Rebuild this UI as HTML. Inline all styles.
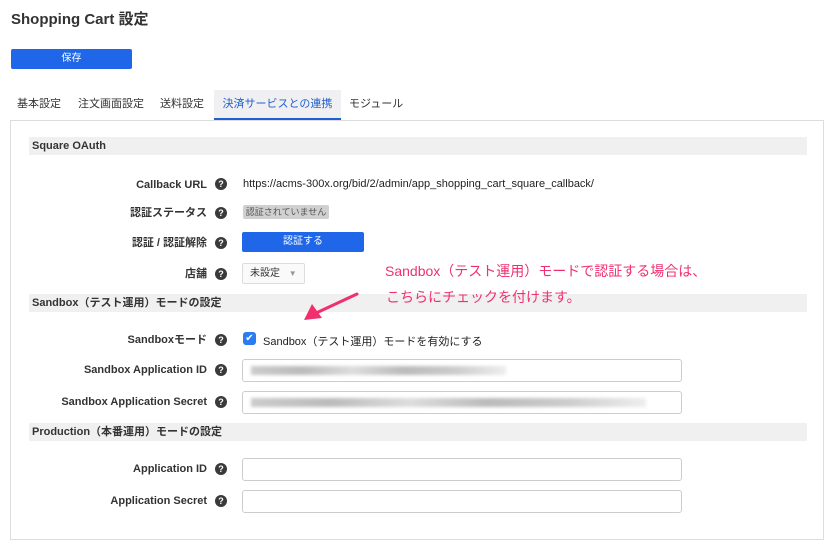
<!DOCTYPE html>
<html><head><meta charset="utf-8"><style>
body{margin:0;width:835px;height:553px;background:#fff;font-family:"Liberation Sans","Noto Sans CJK JP",sans-serif;color:#333;position:relative;overflow:hidden}
.a{position:absolute;white-space:nowrap}
.h{position:absolute;left:29px;width:778px;height:18px;background:#f0f0f0;font-size:11px;font-weight:bold;line-height:19px;text-indent:3px;color:#333}
.l{position:absolute;right:628px;font-size:11px;font-weight:bold;color:#333;line-height:14px}
.q{position:absolute;left:215px;width:12px;height:12px;border-radius:50%;background:#3a3a3a;color:#fff;font-size:9px;font-weight:bold;text-align:center;line-height:12px}
.in{position:absolute;left:242px;width:438px;height:21px;border:1px solid #ccc;border-radius:3px;background:#fff}
.blur{position:absolute;left:8px;top:6px;height:9px;background:linear-gradient(90deg,#ccc,#bbb 20%,#ddd 40%,#bbb 60%,#ccc 80%,#eee);filter:blur(1.5px)}
.tab{position:absolute;top:90px;height:30px;line-height:29px;font-size:11px;color:#333}
.pk{color:#f0306e;font-size:14px}
.btn{position:absolute;background:#1f66e8;border-radius:2px;color:#fff;font-size:10px;text-align:center;height:20px}
.btn span{position:absolute;left:0;right:0;top:4px;line-height:12px}
</style></head><body>
<div class="a" style="left:11px;top:8px;font-size:15px;font-weight:bold;color:#333">Shopping Cart 設定</div>
<div class="btn" style="left:11px;top:49px;width:121px"><span>保存</span></div>
<div class="tab" style="left:17px">基本設定</div>
<div class="tab" style="left:78px">注文画面設定</div>
<div class="tab" style="left:160px">送料設定</div>
<div class="tab" style="left:214px;width:127px;background:#f0f0f2;border-bottom:2px solid #1f5fcf;height:28px;color:#1f5fcf;text-align:center">決済サービスとの連携</div>
<div class="tab" style="left:349px">モジュール</div>
<div class="a" style="left:10px;top:120px;width:812px;height:418px;border:1px solid #ddd"></div>

<div class="h" style="top:137px">Square OAuth</div>
<div class="l" style="top:178px">Callback URL</div><div class="q" style="top:178px">?</div>
<div class="a" style="left:243px;top:178px;font-size:11px;color:#222">https://acms-300x.org/bid/2/admin/app_shopping_cart_square_callback/</div>
<div class="l" style="top:206px">認証ステータス</div><div class="q" style="top:207px">?</div>
<div class="a" style="left:243px;top:205px;width:86px;height:14px;background:#d0d0d0;border-radius:2px;font-size:9px;line-height:15px;text-align:center;color:#555">認証されていません</div>
<div class="l" style="top:236px">認証 / 認証解除</div><div class="q" style="top:237px">?</div>
<div class="btn" style="left:242px;top:232px;width:122px"><span>認証する</span></div>
<div class="l" style="top:267px">店舗</div><div class="q" style="top:268px">?</div>
<div class="a" style="left:242px;top:263px;width:61px;height:19px;border:1px solid #ddd;border-radius:2px;background:#fafafa;font-size:10px;line-height:20px;text-indent:7px">未設定 <span style="color:#999;font-size:8px;margin-left:6px">▼</span></div>
<div class="a pk" style="left:385px;top:261px">Sandbox（テスト運用）モードで認証する場合は、</div>
<div class="h" style="top:294px">Sandbox（テスト運用）モードの設定</div>
<div class="a pk" style="left:386px;top:287px">こちらにチェックを付けます。</div>
<svg class="a" style="left:300px;top:290px" width="62" height="36"><line x1="57" y1="4" x2="14" y2="24" stroke="#f0306e" stroke-width="3" stroke-linecap="round"/><polygon points="4,30 12,14 22,28" fill="#f0306e"/></svg>
<div class="l" style="top:333px">Sandboxモード</div><div class="q" style="top:334px">?</div>
<div class="a" style="left:243px;top:332px;width:13px;height:13px;background:#2a7cf0;border-radius:3px;color:#fff;font-size:10px;line-height:13px;text-align:center">✔</div>
<div class="a" style="left:263px;top:333px;font-size:11px;color:#222">Sandbox（テスト運用）モードを有効にする</div>
<div class="l" style="top:363px">Sandbox Application ID</div><div class="q" style="top:364px">?</div>
<div class="in" style="top:359px"><div class="blur" style="width:255px"></div></div>
<div class="l" style="top:395px">Sandbox Application Secret</div><div class="q" style="top:396px">?</div>
<div class="in" style="top:391px"><div class="blur" style="width:395px"></div></div>
<div class="h" style="top:423px">Production（本番運用）モードの設定</div>
<div class="l" style="top:462px">Application ID</div><div class="q" style="top:463px">?</div>
<div class="in" style="top:458px"></div>
<div class="l" style="top:494px">Application Secret</div><div class="q" style="top:495px">?</div>
<div class="in" style="top:490px"></div>
</body></html>
